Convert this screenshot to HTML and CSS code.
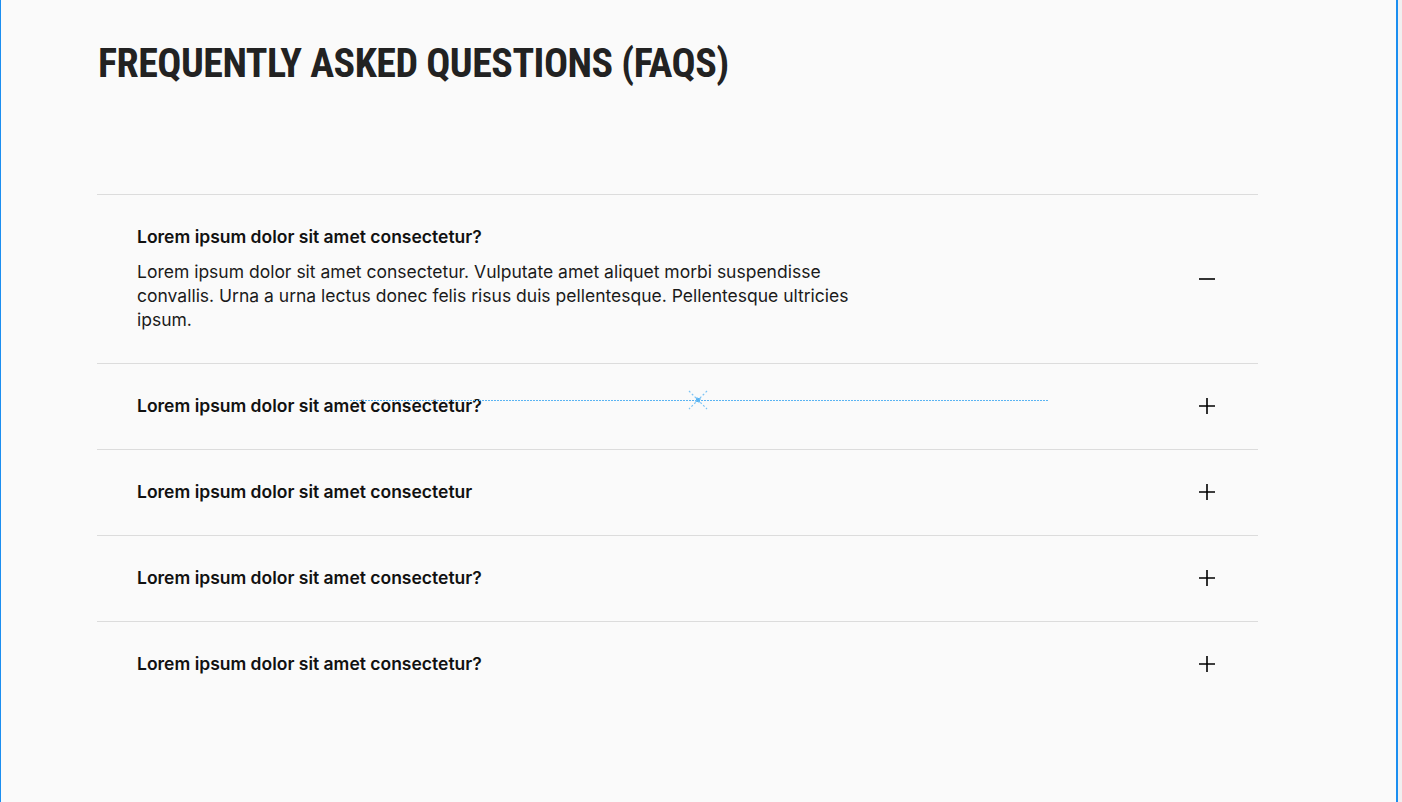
FILE: index.html
```html
<!DOCTYPE html>
<html lang="en">
<head>
<meta charset="utf-8">
<title>FAQs</title>
<link rel="stylesheet" href="styles.css">
</head>
<body>
<div class="frame">
  <main class="content">
    <h1 class="title">FREQUENTLY ASKED QUESTIONS (FAQS)</h1>
    <section class="faq">
      <div class="item open">
        <div class="text">
          <h3 class="q">Lorem ipsum dolor sit amet consectetur?</h3>
          <p class="a">Lorem ipsum dolor sit amet consectetur. Vulputate amet aliquet morbi suspendisse convallis. Urna a urna lectus donec felis risus duis pellentesque. Pellentesque ultricies ipsum.</p>
        </div>
        <svg class="icon" viewBox="0 0 24 24"><path d="M4 12h16"/></svg>
      </div>
      <div class="item">
        <div class="text"><h3 class="q">Lorem ipsum dolor sit amet consectetur?</h3></div>
        <svg class="icon" viewBox="0 0 24 24"><path d="M4 12h16M12 4v16"/></svg>
      </div>
      <div class="item">
        <div class="text"><h3 class="q">Lorem ipsum dolor sit amet consectetur</h3></div>
        <svg class="icon" viewBox="0 0 24 24"><path d="M4 12h16M12 4v16"/></svg>
      </div>
      <div class="item">
        <div class="text"><h3 class="q">Lorem ipsum dolor sit amet consectetur?</h3></div>
        <svg class="icon" viewBox="0 0 24 24"><path d="M4 12h16M12 4v16"/></svg>
      </div>
      <div class="item">
        <div class="text"><h3 class="q">Lorem ipsum dolor sit amet consectetur?</h3></div>
        <svg class="icon" viewBox="0 0 24 24"><path d="M4 12h16M12 4v16"/></svg>
      </div>
    </section>
  </main>
  <div class="guide">
    <svg class="guide-x" viewBox="0 0 20 20"><path d="M1 1L19 19M19 1L1 19"/><rect x="8" y="8" width="4" height="4"/></svg>
  </div>
</div>
</body>
</html>
```

FILE: styles.css
```css
html, body {
  margin: 0;
  padding: 0;
  background: #f0f0f0;
}
body {
  font-family: Inter, "Noto Sans", sans-serif;
  color: #111111;
}
.frame {
  position: relative;
  width: 1398px;
  height: 802px;
  box-sizing: border-box;
  background: #fafafa;
  border-left: 1px solid #1b8ef0;
  border-right: 2px solid #1b8ef0;
  overflow: hidden;
}
.content {
  padding: 40px 0 0 96px;
}
.title {
  margin: 0 0 0 1px;
  font-family: Roboto, "Liberation Sans Narrow", sans-serif;
  font-stretch: 75%;
  font-weight: 700;
  font-size: 40px;
  line-height: 48px;
  color: #222222;
  letter-spacing: -0.5px;
}
.faq {
  margin-top: 106px;
  width: 1161px;
}
.item {
  display: flex;
  align-items: center;
  border-top: 1px solid #dcdcdc;
  padding: 30px 39px 31px 40px;
}
.text {
  flex: 1;
}
.q {
  margin: 0;
  font-size: 17.5px;
  line-height: 24px;
  font-weight: 600;
  color: #111111;
}
.a {
  margin: 11px 0 0;
  max-width: 720px;
  font-size: 17.5px;
  line-height: 24px;
  font-weight: 400;
  color: #1a1a1a;
}
.icon {
  width: 24px;
  height: 24px;
  flex: none;
  fill: none;
  stroke: #000000;
  stroke-width: 1.6;
}
.guide {
  position: absolute;
  left: 349px;
  top: 400px;
  width: 698px;
  height: 1px;
  background-image: repeating-linear-gradient(90deg, #5ab4f2 0 2px, transparent 2px 3px);
}
.guide-x {
  position: absolute;
  left: 338px;
  top: -10px;
  width: 20px;
  height: 20px;
  fill: #5ab4f2;
  stroke: #7cc4f5;
  stroke-width: 1.2;
  stroke-dasharray: 2 2;
}
```
